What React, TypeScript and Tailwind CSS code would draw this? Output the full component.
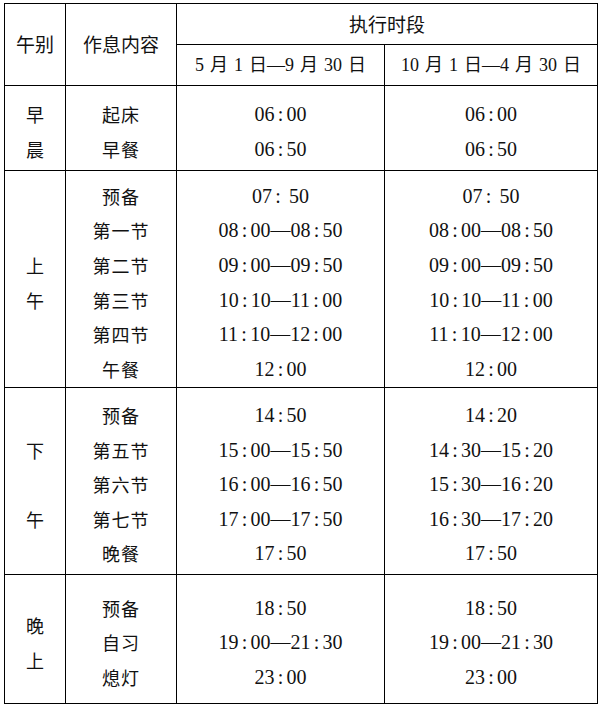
import React from "react";

const Time = ({ t }: { t: string }) => {
  const parts = t.split(":");
  return (
    <span>
      {parts.map((p, i) => (
        <React.Fragment key={i}>
          {i > 0 && <span className="inline-block w-[12px] text-center">:</span>}
          {p}
        </React.Fragment>
      ))}
    </span>
  );
};

type Section = {
  h: string;
  label: (string | null)[];
  items: string[];
  a: string[];
  b: string[];
};

const sections: Section[] = [
  {
    h: "h-[85px]",
    label: ["早", "晨"],
    items: ["起床", "早餐"],
    a: ["06:00", "06:50"],
    b: ["06:00", "06:50"],
  },
  {
    h: "h-[217px]",
    label: ["上", "午"],
    items: ["预备", "第一节", "第二节", "第三节", "第四节", "午餐"],
    a: ["07: 50", "08:00—08:50", "09:00—09:50", "10:10—11:00", "11:10—12:00", "12:00"],
    b: ["07: 50", "08:00—08:50", "09:00—09:50", "10:10—11:00", "11:10—12:00", "12:00"],
  },
  {
    h: "h-[187px]",
    label: ["下", null, "午"],
    items: ["预备", "第五节", "第六节", "第七节", "晚餐"],
    a: ["14:50", "15:00—15:50", "16:00—16:50", "17:00—17:50", "17:50"],
    b: ["14:20", "14:30—15:20", "15:30—16:20", "16:30—17:20", "17:50"],
  },
  {
    h: "h-[129px]",
    label: ["晚", "上"],
    items: ["预备", "自习", "熄灯"],
    a: ["18:50", "19:00—21:30", "23:00"],
    b: ["18:50", "19:00—21:30", "23:00"],
  },
];

const cell = "border-r border-b border-black flex flex-col items-center justify-center";

export default function App() {
  return (
    <div className="w-[601px] h-[706px] bg-white pt-[3px] pl-[4px] text-[#111] font-['Liberation_Serif','Noto_Sans_CJK_SC',serif]">
      <div className="grid grid-cols-[61px_111px_208px_213px] grid-rows-[41px_41px] w-[594px] border-l border-t border-black">
        <div className={`${cell} row-span-2 text-[19px]`}>
          <span className="font-['Noto_Sans_CJK_SC',sans-serif]">午别</span>
        </div>
        <div className={`${cell} row-span-2 text-[19px]`}>
          <span className="font-['Noto_Sans_CJK_SC',sans-serif]">作息内容</span>
        </div>
        <div className={`${cell} col-span-2 text-[19px]`}>
          <span className="font-['Noto_Sans_CJK_SC',sans-serif]">执行时段</span>
        </div>
        <div className={`${cell} text-[18px]`}>
          <span className="whitespace-pre [word-spacing:1.5px]">5 月 1 日—9 月 30 日</span>
        </div>
        <div className={`${cell} text-[18px]`}>
          <span className="whitespace-pre [word-spacing:1.5px]">10 月 1 日—4 月 30 日</span>
        </div>
      </div>
      {sections.map((s, si) => (
        <div
          key={si}
          className={`grid grid-cols-[61px_111px_208px_213px] w-[594px] border-l border-black ${s.h}`}
        >
          <div className={`${cell} pt-[7px] text-[18px] font-['Noto_Sans_CJK_SC',sans-serif]`}>
            {s.label.map((l, i) => (
              <div key={i} className="h-[34.6px] leading-[34.6px]">
                {l ?? "\u00a0"}
              </div>
            ))}
          </div>
          <div className={`${cell} pt-[7px] text-[18px] font-['Noto_Sans_CJK_SC',sans-serif]`}>
            {s.items.map((l, i) => (
              <div key={i} className="h-[34.6px] leading-[34.6px] tracking-[1px]">
                {l}
              </div>
            ))}
          </div>
          <div className={`${cell} pt-[7px] text-[20px]`}>
            {s.a.map((l, i) => (
              <div key={i} className="h-[34.6px] leading-[34.6px] whitespace-pre">
                <Time t={l} />
              </div>
            ))}
          </div>
          <div className={`${cell} pt-[7px] text-[20px]`}>
            {s.b.map((l, i) => (
              <div key={i} className="h-[34.6px] leading-[34.6px] whitespace-pre">
                <Time t={l} />
              </div>
            ))}
          </div>
        </div>
      ))}
    </div>
  );
}
